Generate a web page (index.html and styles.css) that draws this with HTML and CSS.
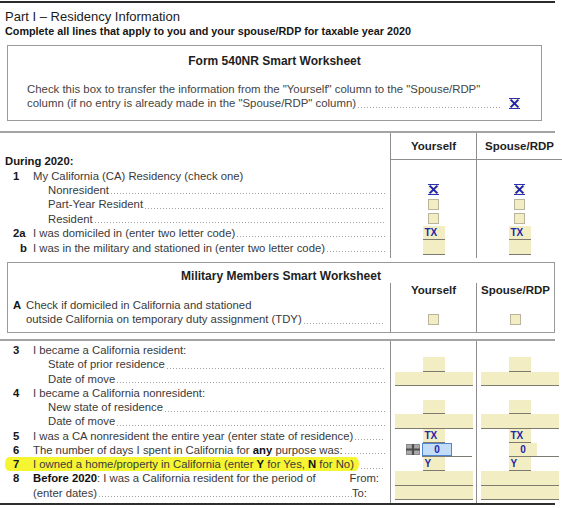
FILE: index.html
```html
<!DOCTYPE html>
<html>
<head>
<meta charset="utf-8">
<title>Part I - Residency Information</title>
<link rel="stylesheet" href="styles.css">
</head>
<body>
<div class="page">
  <div class="topline"></div>
  <h1 class="part-title">Part I – Residency Information</h1>
  <p class="part-sub">Complete all lines that apply to you and your spouse/RDP for taxable year 2020</p>

  <div class="smart">
    <div class="smart-title">Form 540NR Smart Worksheet</div>
    <div class="smart-body">
      <div class="smart-lines">
        <div class="sline">Check this box to transfer the information from the "Yourself" column to the "Spouse/RDP"</div>
        <div class="sline"><span>column (if no entry is already made in the "Spouse/RDP" column)</span><span class="dots"></span></div>
      </div>
      <svg class="cbx smart-cb" width="11" height="11" viewBox="0 0 11 11"><rect width="11" height="11" fill="#f8f5e2"/><path d="M0 0.5H11M0 10.5H11" stroke="#2a2fb4" stroke-width="1"/><path d="M1.6 1.6L9.4 9.4M9.4 1.6L1.6 9.4" stroke="#1f24ad" stroke-width="2"/></svg>
    </div>
  </div>

  <div class="sec sec1">
    <div class="grid g1">
      <div class="lbl"></div><div class="c colhead">Yourself</div><div class="c colhead">Spouse/RDP</div>

      <div class="lbl head">During 2020:</div><div class="c"></div><div class="c"></div>

      <div class="lbl"><span class="num">1</span><span class="txt">My California (CA) Residency (check one)</span></div><div class="c"></div><div class="c"></div>

      <div class="lbl sub"><span class="txt">Nonresident</span><span class="dots"></span></div>
      <div class="c"><svg class="cbx" width="11" height="11" viewBox="0 0 11 11"><rect width="11" height="11" fill="#f8f5e2"/><path d="M0 0.5H11M0 10.5H11" stroke="#2a2fb4" stroke-width="1"/><path d="M1.6 1.6L9.4 9.4M9.4 1.6L1.6 9.4" stroke="#1f24ad" stroke-width="2"/></svg></div>
      <div class="c"><svg class="cbx" width="11" height="11" viewBox="0 0 11 11"><rect width="11" height="11" fill="#f8f5e2"/><path d="M0 0.5H11M0 10.5H11" stroke="#2a2fb4" stroke-width="1"/><path d="M1.6 1.6L9.4 9.4M9.4 1.6L1.6 9.4" stroke="#1f24ad" stroke-width="2"/></svg></div>

      <div class="lbl sub"><span class="txt">Part-Year Resident</span><span class="dots"></span></div>
      <div class="c"><span class="cb"></span></div><div class="c"><span class="cb"></span></div>

      <div class="lbl sub"><span class="txt">Resident</span><span class="dots"></span></div>
      <div class="c"><span class="cb"></span></div><div class="c"><span class="cb"></span></div>

      <div class="lbl"><span class="num">2a</span><span class="txt">I was domiciled in (enter two letter code)</span><span class="dots"></span></div>
      <div class="c"><span class="fld">TX</span></div><div class="c"><span class="fld">TX</span></div>

      <div class="lbl"><span class="num nb">b</span><span class="txt">I was in the military and stationed in (enter two letter code)</span><span class="dots"></span></div>
      <div class="c"><span class="fld"></span></div><div class="c"><span class="fld"></span></div>

      <div class="lbl"></div><div class="c"></div><div class="c"></div>
    </div>
  </div>

  <div class="mil">
    <div class="mil-title">Military Members Smart Worksheet</div>
    <div class="grid g-mil">
      <div class="lbl"></div><div class="c mhead">Yourself</div><div class="c mhead">Spouse/RDP</div>

      <div class="lbl"><span class="num mnum">A</span><span class="txt">Check if domiciled in California and stationed</span></div><div class="c"></div><div class="c"></div>

      <div class="lbl"><span class="num mnum"></span><span class="txt">outside California on temporary duty assignment (TDY)</span><span class="dots"></span></div>
      <div class="c"><span class="cb"></span></div><div class="c"><span class="cb"></span></div>

      <div class="lbl"></div><div class="c"></div><div class="c"></div>
    </div>
  </div>

  <div class="sec sec2">
    <div class="grid g2">
      <div class="lbl"></div><div class="c"></div><div class="c"></div>

      <div class="lbl"><span class="num">3</span><span class="txt">I became a California resident:</span></div><div class="c"></div><div class="c"></div>

      <div class="lbl sub"><span class="txt">State of prior residence</span><span class="dots"></span></div>
      <div class="c"><span class="fld"></span></div><div class="c"><span class="fld"></span></div>

      <div class="lbl sub"><span class="txt">Date of move</span><span class="dots"></span></div>
      <div class="c"><span class="fld wide"></span></div><div class="c"><span class="fld wide"></span></div>

      <div class="lbl"><span class="num">4</span><span class="txt">I became a California nonresident:</span></div><div class="c"></div><div class="c"></div>

      <div class="lbl sub"><span class="txt">New state of residence</span><span class="dots"></span></div>
      <div class="c"><span class="fld"></span></div><div class="c"><span class="fld"></span></div>

      <div class="lbl sub"><span class="txt">Date of move</span><span class="dots"></span></div>
      <div class="c"><span class="fld wide"></span></div><div class="c"><span class="fld wide"></span></div>

      <div class="lbl"><span class="num">5</span><span class="txt">I was a CA nonresident the entire year (enter state of residence)</span><span class="dots"></span></div>
      <div class="c"><span class="fld">TX</span></div><div class="c"><span class="fld">TX</span></div>

      <div class="lbl"><span class="num">6</span><span class="txt">The number of days I spent in California for <b>any</b> purpose was:</span><span class="dots"></span></div>
      <div class="c numcell you">
        <svg class="plus" width="14" height="11" viewBox="0 0 14 11"><rect width="14" height="11" fill="#a9a9a9"/><rect x="0.5" y="0.5" width="13" height="10" fill="none" stroke="#8a8a8a"/><path d="M7 0V11M0 5.5H14" stroke="#4d4d4d" stroke-width="2.2"/></svg>
        <span class="nfld"><span class="nval focus">0</span></span>
      </div>
      <div class="c numcell sp"><span class="nfld"><span class="nval">0</span></span></div>

      <div class="lbl"><span class="hl"><span class="num">7</span><span class="txt">I owned a home/property in California (enter <b>Y</b> for Yes, <b>N</b> for No)</span></span><span class="dots"></span></div>
      <div class="c"><span class="fld">Y</span></div><div class="c"><span class="fld">Y</span></div>

      <div class="lbl"><span class="num">8</span><span class="txt"><b>Before 2020</b>: I was a California resident for the period of</span><span class="from">From:</span></div>
      <div class="c"><span class="fld wide"></span></div><div class="c"><span class="fld wide"></span></div>

      <div class="lbl"><span class="num"></span><span class="txt">(enter dates)</span><span class="dots"></span><span class="to">To:</span></div>
      <div class="c"><span class="fld wide"></span></div><div class="c"><span class="fld wide"></span></div>

      <div class="lbl"></div><div class="c"></div><div class="c"></div>
    </div>
  </div>
</div>
</body>
</html>
```
FILE: styles.css
```css
* { box-sizing: border-box; }

body {
  margin: 0;
  background: #ffffff;
  font-family: "Liberation Sans", Arial, sans-serif;
  font-size: 11.3px;
  color: #3a3a3a;
}

.page {
  width: 562px;
  overflow: hidden;
}

.topline {
  margin-top: 1px;
  width: 555px;
  border-top: 2px solid #2b2b2b;
}

.part-title {
  margin: 6px 0 0 5px;
  font-size: 13px;
  font-weight: normal;
  line-height: 15px;
  color: #1b1b1b;
}

.part-sub {
  margin: 0 0 0 5px;
  font-size: 10.8px;
  font-weight: bold;
  line-height: 14px;
  letter-spacing: 0;
  color: #151515;
}

/* Smart worksheet box */
.smart {
  margin: 7px 0 0 7px;
  width: 535px;
  height: 76px;
  border: 1px solid #9a9a9a;
  padding-top: 8px;
}

.smart-title {
  text-align: center;
  font-weight: bold;
  font-size: 12px;
  line-height: 14px;
  color: #1e1e1e;
}

.smart-body {
  display: flex;
  margin-top: 14px;
  padding: 0 21px 0 19px;
}

.smart-lines {
  flex: 1;
  font-size: 11.4px;
  color: #444;
}

.sline {
  display: flex;
  height: 14px;
  line-height: 14px;
  white-space: nowrap;
}

.smart-cb {
  align-self: flex-end;
  margin: 0 0 1px 8px;
}

.dots {
  flex: 1;
  align-self: stretch;
  min-width: 0;
  margin-left: 2px;
  background-image: linear-gradient(to right, #a2a2a2 1px, transparent 1px);
  background-size: 3px 1px;
  background-repeat: repeat-x;
  background-position: 0 10.5px;
}

/* Sections with columns */
.sec {
  width: 555px;
  border-top: 2px solid #a3a3a3;
}

.sec1 { margin-top: 10px; }

.sec2 {
  margin-top: 6px;
  border-bottom: 2px solid #2e2e2e;
}

.grid {
  display: grid;
  grid-template-columns: 390px 86px 86px;
  width: 562px;
}

.g1 { grid-template-rows: 21px repeat(7, 14.4px) 3px; }
.g2 { grid-template-rows: 2.5px repeat(11, 14.25px) 3.5px; }

.lbl {
  display: flex;
  align-items: center;
  padding: 0 5px 0 13px;
  white-space: nowrap;
  min-width: 0;
  line-height: 14px;
}

.lbl.head {
  padding-left: 5px;
  font-weight: bold;
  color: #161616;
}

.lbl.sub { padding-left: 48px; }

.num {
  flex: none;
  width: 20px;
  font-weight: bold;
  color: #161616;
}

.num.nb { padding-left: 7px; }

.txt b { color: #111; }

.from {
  margin-left: auto;
  margin-right: 6px;
}

.to { margin-right: 18px; }

.hl {
  display: flex;
  align-items: center;
  align-self: stretch;
  margin-left: -8px;
  padding: 0 5px 0 8px;
  background: #f6f531;
  border-radius: 4px / 7px;
}

.c {
  border-left: 1px solid #8e8e8e;
  display: flex;
  justify-content: center;
  align-items: center;
}

.colhead {
  margin-bottom: -6px;
  border-bottom: 1px solid #8e8e8e;
  font-weight: bold;
  font-size: 11.5px;
  color: #1e1e1e;
}

/* inputs */
.cb {
  width: 11px;
  height: 11px;
  background: #f3edc4;
  border: 1px solid #b9b49b;
}

.cbx { display: block; }

.fld {
  align-self: stretch;
  width: 22px;
  background: #f3edc4;
  border-bottom: 1px solid #7d7b70;
  padding-left: 2px;
  font-size: 10px;
  font-weight: bold;
  line-height: 13px;
  color: #2326a8;
}

.fld.wide { width: 78px; }

.numcell { justify-content: flex-start; }
.numcell.you { padding-left: 15px; }
.numcell.sp { padding-left: 32px; }

.plus {
  display: block;
  margin-right: 2px;
}

.nfld {
  align-self: stretch;
  width: 50px;
  border-bottom: 1px solid #7d7b70;
  display: flex;
}

.nval {
  width: 28px;
  background: #f3edc4;
  text-align: center;
  font-size: 10px;
  font-weight: bold;
  line-height: 13px;
  color: #2326a8;
}

.nval.focus {
  width: 30px;
  background: #c3dcf7;
  border: 1px solid #4f86d4;
  line-height: 11px;
}

/* Military box */
.mil {
  margin: 4px 0 0 7px;
  width: 548px;
  border: 1px solid #9a9a9a;
  padding-top: 6px;
}

.mil-title {
  text-align: center;
  font-weight: bold;
  font-size: 12px;
  line-height: 14px;
  color: #1e1e1e;
}

.g-mil {
  grid-template-columns: 382px 86px 78px;
  grid-template-rows: 15px 14.4px 14.4px 5px;
  width: 546px;
}

.g-mil .lbl { padding-left: 5px; }

.num.mnum { width: 13px; }

.mhead {
  font-weight: bold;
  font-size: 11.5px;
  color: #1e1e1e;
}
```
